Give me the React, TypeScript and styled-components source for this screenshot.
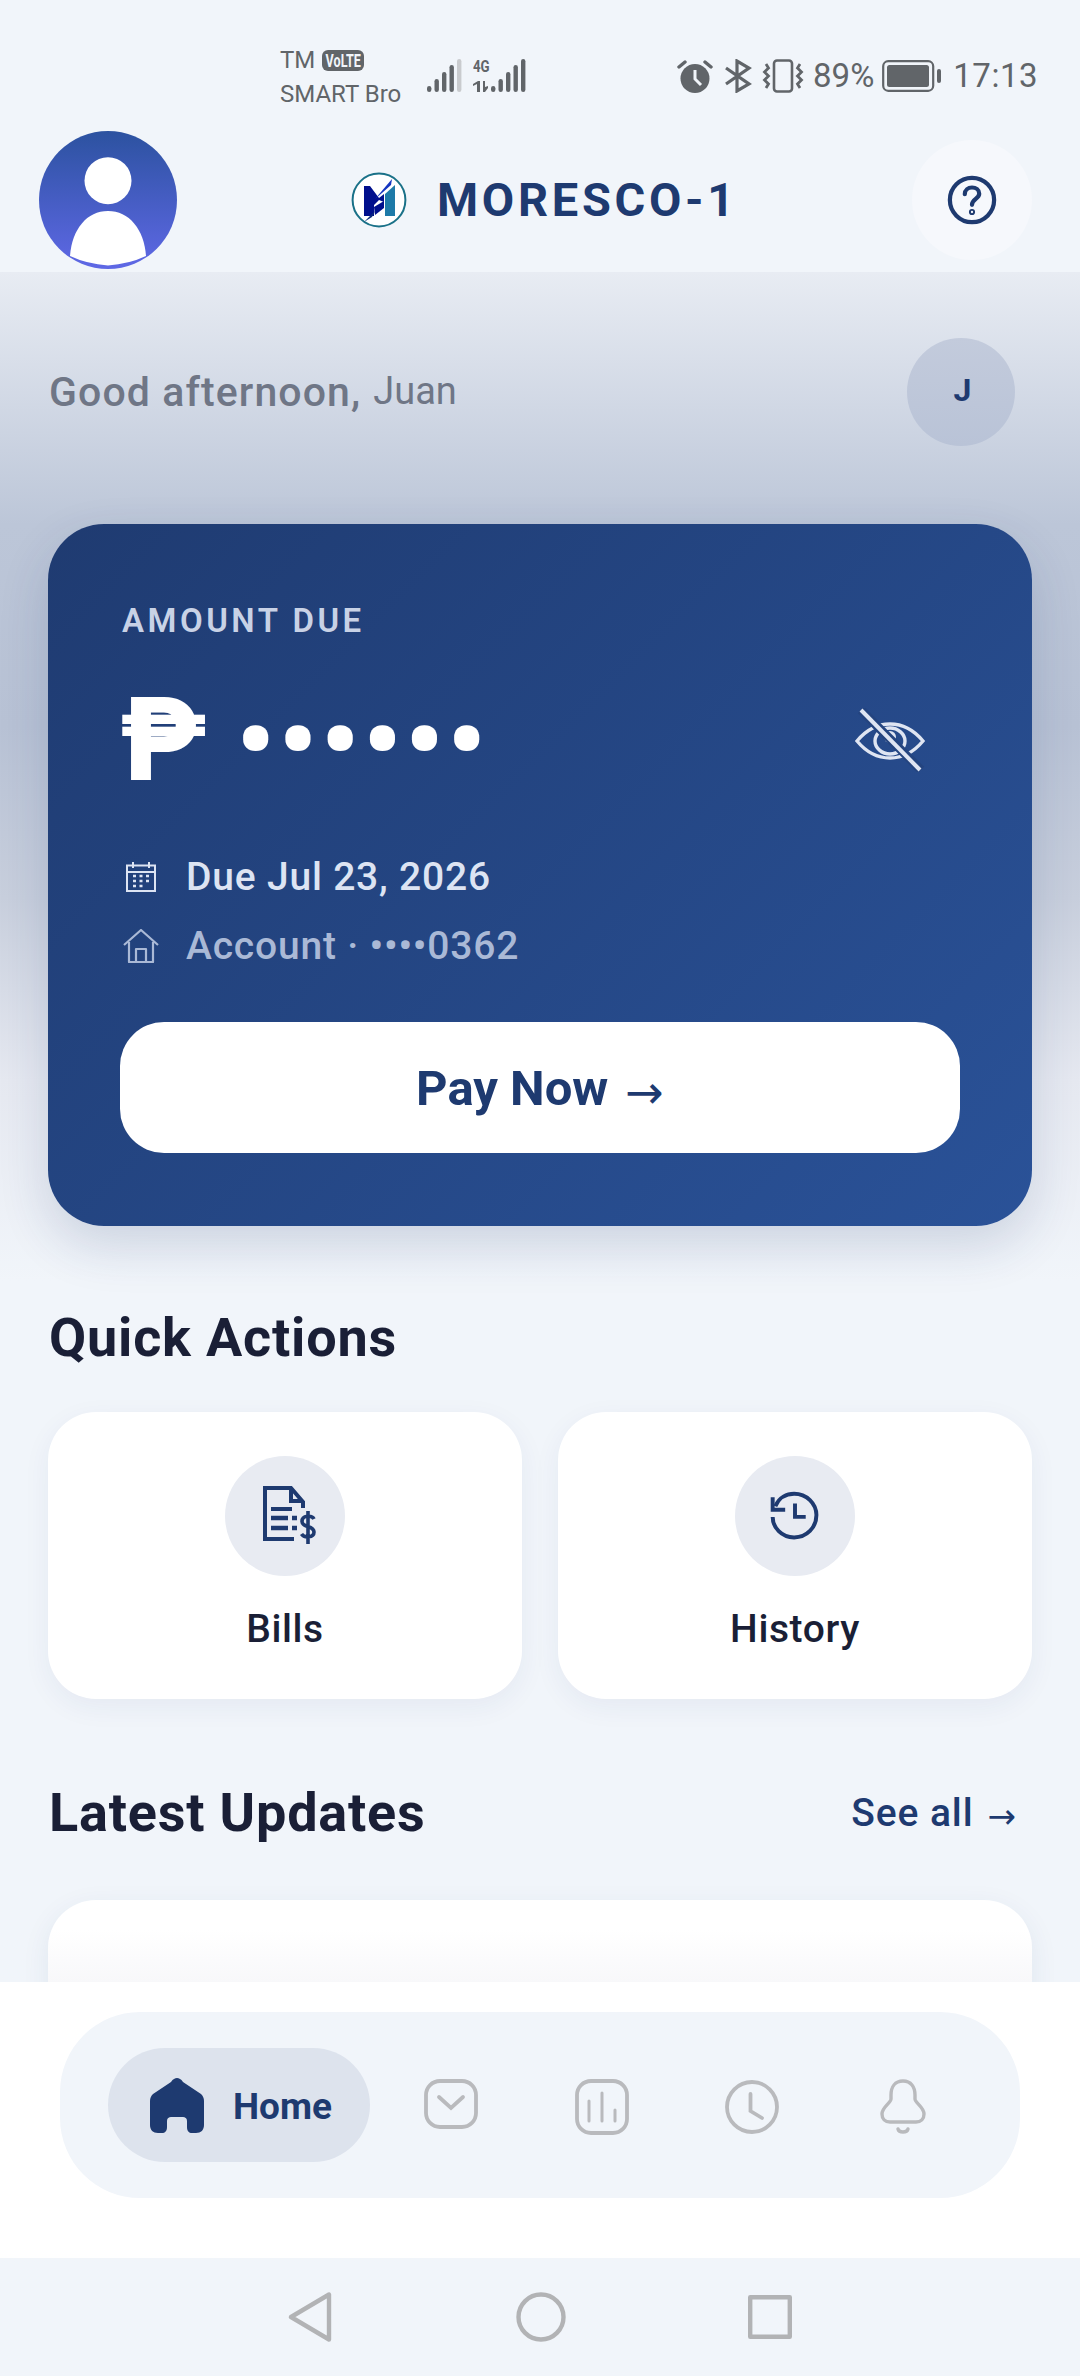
import React, { FC } from 'react';
import styled, { createGlobalStyle } from 'styled-components';

const navy = '#1e3a70';
const ink = '#1a1f36';
const paper = '#f1f5fa';
const statusGrey = '#616569';
const idleGrey = '#b9babd';
const systemGrey = '#b2b3b5';

const GlobalStyle = createGlobalStyle`
  html, body {
    margin: 0;
    padding: 0;
    background: ${paper};
  }
  * {
    box-sizing: border-box;
  }
  body {
    font-family: Roboto, "Liberation Sans", sans-serif;
  }
`;

const Page = styled.div`
  width: 1080px;
  height: 2376px;
  display: flex;
  flex-direction: column;
  overflow: hidden;
  background: ${paper};
`;

/* status bar */
const StatusBar = styled.div`
  height: 120px;
  flex: none;
  display: flex;
  align-items: flex-start;
  padding: 43px 42px 0 280px;
  color: ${statusGrey};
`;

const Carriers = styled.div`
  width: 147px;
  font-size: 24px;
  flex: none;
`;

const CarrierLine = styled.div`
  display: flex;
  align-items: center;
  gap: 7px;
  height: 34px;
`;

const VolteBadge = styled.span`
  width: 42px;
  height: 21px;
  border-radius: 6px;
  background: ${statusGrey};
  color: ${paper};
  display: flex;
  align-items: center;
  justify-content: center;
  overflow: hidden;
`;

const VolteText = styled.span`
  display: inline-block;
  font-size: 18px;
  font-weight: 700;
  line-height: 21px;
  white-space: nowrap;
  transform: scaleX(0.7);
`;

const Signals = styled.div`
  display: flex;
  align-items: flex-end;
  height: 49px;
  flex: none;
`;

const NetStack = styled.div`
  display: flex;
  flex-direction: column;
  align-items: flex-start;
  justify-content: space-between;
  width: 18px;
  height: 33px;
  margin-left: 11px;
`;

const NetLabel = styled.span`
  font-size: 17px;
  font-weight: 700;
  line-height: 15px;
  white-space: nowrap;
  transform: scaleX(0.78);
  transform-origin: left center;
`;

const StatusRight = styled.div`
  margin-left: auto;
  display: flex;
  align-items: center;
  height: 44px;
  margin-top: 11px;
  font-size: 33px;
`;

const StatusIcon = styled.svg<{ $left?: number }>`
  margin-left: ${(p) => p.$left ?? 0}px;
  flex: none;
`;

const StatusText = styled.span<{ $left: number; $spacing?: number }>`
  margin-left: ${(p) => p.$left}px;
  letter-spacing: ${(p) => p.$spacing ?? 0}px;
  line-height: 44px;
`;

/* header */
const Header = styled.header`
  height: 152px;
  flex: none;
  display: flex;
  align-items: center;
  justify-content: space-between;
  padding: 8px 48px 0 39px;
  background: ${paper};
`;

const Avatar = styled.div`
  width: 138px;
  height: 138px;
  border-radius: 50%;
  overflow: hidden;
  background: linear-gradient(180deg, #2c52a0 0%, #5f68e6 100%);
`;

const Brand = styled.div`
  display: flex;
  align-items: center;
  gap: 30px;
`;

const BrandName = styled.span`
  color: ${navy};
  font-size: 47px;
  font-weight: 700;
  letter-spacing: 3.7px;
  line-height: 56px;
`;

const HelpButton = styled.div`
  width: 120px;
  height: 120px;
  border-radius: 50%;
  background: #f6f8fc;
  display: flex;
  align-items: center;
  justify-content: center;
`;

/* scrolling body */
const Content = styled.main`
  flex: 1;
  min-height: 0;
  overflow: hidden;
  padding: 0 48px;
  background: linear-gradient(180deg, #e8ecf3 0%, #bcc6d8 25%, #b8c2d5 45%, #c8cfdd 62%, #e6e9f1 80%, ${paper} 100%) 0 0 / 100% 1010px no-repeat;
`;

const Greeting = styled.div`
  height: 252px;
  display: flex;
  align-items: flex-start;
  justify-content: space-between;
  padding: 66px 17px 0 1px;
`;

const GreetingText = styled.div`
  display: flex;
  align-items: baseline;
  height: 108px;
  padding-top: 26px;
  color: #6f7686;
`;

const GreetingLead = styled.span`
  font-size: 41px;
  font-weight: 500;
  letter-spacing: 1.1px;
  line-height: 56px;
`;

const GreetingName = styled.span`
  font-size: 38px;
  margin-left: 12px;
  position: relative;
  top: -2px;
`;

const UserBadge = styled.div`
  width: 108px;
  height: 108px;
  border-radius: 50%;
  background: linear-gradient(180deg, #c3cbdc, #b9c3d7);
  color: ${navy};
  font-size: 32px;
  font-weight: 700;
  display: flex;
  align-items: center;
  justify-content: center;
  padding: 0 0 4px 3px;
`;

const DueCard = styled.section`
  height: 702px;
  border-radius: 56px;
  padding: 78px 72px 72px;
  background: linear-gradient(135deg, #1f3b71 0%, #2a5298 100%);
  box-shadow: 0 20px 50px rgba(30, 58, 112, 0.16);
  display: flex;
  flex-direction: column;
`;

const DueLabel = styled.div`
  color: #c8d2e6;
  font-size: 33px;
  font-weight: 600;
  letter-spacing: 3.5px;
  line-height: 38px;
  margin-left: 2px;
`;

const AmountRow = styled.div`
  height: 90px;
  margin-top: 55px;
  display: flex;
  align-items: center;
`;

const PesoSign = styled.span`
  color: #fff;
  font-size: 116px;
  font-weight: 900;
  line-height: 90px;
  width: 116px;
  flex: none;
`;

const HiddenAmount = styled.span`
  color: #fff;
  font-size: 108px;
  line-height: 90px;
  letter-spacing: 3.4px;
  font-weight: 700;
`;

const EyeToggle = styled.div`
  margin-left: auto;
  margin-right: 35px;
  display: flex;
`;

const MetaRow = styled.div<{ $dim?: boolean; $top: number }>`
  display: flex;
  align-items: center;
  gap: 25px;
  height: 50px;
  margin-top: ${(p) => p.$top}px;
  color: ${(p) => (p.$dim ? '#aab9d6' : '#dde4f3')};
  font-size: 39px;
  font-weight: 500;
  letter-spacing: 0.8px;
`;

const MetaIcon = styled.span`
  width: 40px;
  display: flex;
  justify-content: center;
  margin-left: 1px;
  flex: none;
`;

const PayButton = styled.div`
  height: 131px;
  margin-top: 51px;
  border-radius: 44px;
  background: #fff;
  color: ${navy};
  display: flex;
  align-items: center;
  justify-content: center;
  gap: 17px;
  font-size: 49px;
  font-weight: 700;
`;

const PayLabel = styled.span`
  padding-top: 2px;
`;

const Arrow = styled.span<{ $size: number; $drop: number }>`
  font-family: "DejaVu Sans", sans-serif;
  font-weight: 400;
  font-size: ${(p) => p.$size}px;
  letter-spacing: 0;
  line-height: 1;
  margin-top: ${(p) => p.$drop}px;
`;

const SectionHead = styled.div<{ $top: number }>`
  margin-top: ${(p) => p.$top}px;
  display: flex;
  align-items: center;
  justify-content: space-between;
  height: 64px;
`;

const SectionTitle = styled.h2`
  margin: 0 0 0 1px;
  color: ${ink};
  font-size: 54px;
  font-weight: 700;
  letter-spacing: 0.8px;
  line-height: 64px;
`;

const SeeAll = styled.div`
  color: ${navy};
  font-size: 39px;
  font-weight: 500;
  letter-spacing: 0.9px;
  margin-right: 16px;
  display: flex;
  align-items: center;
  gap: 14px;
`;

const ActionGrid = styled.div`
  margin-top: 42px;
  display: grid;
  grid-template-columns: 1fr 1fr;
  gap: 36px;
`;

const ActionCard = styled.div`
  height: 287px;
  border-radius: 48px;
  background: #fff;
  box-shadow: 0 8px 28px rgba(30, 58, 112, 0.06);
  display: flex;
  flex-direction: column;
  align-items: center;
  padding-top: 44px;
`;

const ActionIcon = styled.div<{ $shift?: number }>`
  width: 120px;
  height: 120px;
  border-radius: 50%;
  background: #e8ebf2;
  display: flex;
  align-items: center;
  justify-content: center;
  padding-left: ${(p) => p.$shift ?? 0}px;
`;

const ActionLabel = styled.div`
  margin-top: 30px;
  color: ${ink};
  font-size: 39px;
  font-weight: 500;
  letter-spacing: 0.6px;
  line-height: 46px;
`;

const UpdateCard = styled.div`
  margin-top: 55px;
  height: 300px;
  border-radius: 48px;
  background: linear-gradient(180deg, #fff 0, #fff 30px, #f8f8fa 82px);
  box-shadow: 0 8px 28px rgba(30, 58, 112, 0.08);
`;

/* bottom navigation */
const BottomNav = styled.nav`
  height: 276px;
  flex: none;
  background: #fff;
  padding: 30px 60px 0;
`;

const NavPill = styled.div`
  height: 186px;
  border-radius: 80px;
  background: ${paper};
  display: flex;
  align-items: center;
  padding: 0 0 0 48px;
`;

const ActiveTab = styled.div`
  width: 262px;
  height: 114px;
  border-radius: 57px;
  background: #dde3ed;
  display: flex;
  align-items: center;
  gap: 29px;
  padding-left: 42px;
  color: ${navy};
  font-size: 37px;
  font-weight: 700;
  flex: none;
`;

const TabLabel = styled.span`
  padding-top: 2px;
`;

const IdleTabs = styled.div`
  display: grid;
  grid-template-columns: repeat(4, 150.5px);
  margin-left: 6px;
  padding-top: 4px;
`;

const IdleTab = styled.div`
  display: flex;
  justify-content: center;
`;

const SystemNav = styled.div`
  height: 118px;
  flex: none;
  background: ${paper};
  display: flex;
  align-items: center;
  justify-content: center;
  gap: 182px;
  padding-bottom: 1px;
`;

const SignalBars: FC<{ dim?: boolean }> = ({ dim }) => (
  <svg width="35" height="33" viewBox="0 0 35 33">
    {[6, 13, 20, 27, 33].map((h, i) => (
      <rect
        key={h}
        x={i * 7.5}
        y={33 - h}
        width="4.4"
        height={h}
        rx="2.2"
        fill={dim && i === 4 ? '#c9cbce' : statusGrey}
      />
    ))}
  </svg>
);

const MoreLogo: FC = () => (
  <svg width="56" height="56" viewBox="0 0 56 56">
    <circle cx="28" cy="28" r="26.4" fill="#fff" stroke="#1a7188" strokeWidth="2" />
    <path d="M13 14 H19 L28 26 L33 22 V30 L28 28 L23 33 V44 H13 Z" fill="#000f8c" />
    <path d="M23 35 L33 29 V36 L24 43 Z" fill="#000f8c" />
    <path d="M34 22 L44 13 V44 H34 Z" fill="#1e7aa8" />
    <path d="M41 7 L24 27 L31 21 L40 13 Z" fill="#1535c0" />
    <path d="M13 50 L24 39 L21 45 Z" fill="#0b2a78" />
  </svg>
);

const App: FC = () => (
  <Page>
    <GlobalStyle />
    <StatusBar>
      <Carriers>
        <CarrierLine>
          TM
          <VolteBadge>
            <VolteText>VoLTE</VolteText>
          </VolteBadge>
        </CarrierLine>
        <CarrierLine>SMART Bro</CarrierLine>
      </Carriers>
      <Signals>
        <SignalBars dim />
        <NetStack>
          <NetLabel>4G</NetLabel>
          <svg width="18" height="11" viewBox="0 0 18 11" fill={statusGrey}>
            <path d="M4 11 V3 L0 5 V3 L5 0 H7 V11 Z M10 0 H12 V6 L15 5 V7 L12 11 H10 Z" />
          </svg>
        </NetStack>
        <SignalBars />
      </Signals>
      <StatusRight>
        <svg width="36" height="33" viewBox="0 0 36 33">
          <circle cx="18" cy="18.500" r="14.500" fill={statusGrey} />
          <path d="M18 10 V19 L24 25" stroke={paper} strokeWidth="3" fill="none" />
          <path d="M2 7 L8 2 M34 7 L28 2" stroke={statusGrey} strokeWidth="3.4" strokeLinecap="round" />
        </svg>
        <StatusIcon $left={11} width="28" height="34" viewBox="0 0 28 34" fill="none" stroke={statusGrey} strokeWidth="3.2">
          <path d="M2 9 L25 25 L13 32 V2 L25 9 L2 25" />
        </StatusIcon>
        <StatusIcon $left={10} width="42" height="34" viewBox="0 0 42 34" fill="none" stroke={statusGrey} strokeWidth="2.600">
          <rect x="12" y="1.500" width="18" height="31" rx="3" />
          <path d="M4 5 L6.500 9 L2.500 13 L6.500 17 L2.500 21 L6.500 25 L4 29 M38 5 L35.500 9 L39.500 13 L35.500 17 L39.500 21 L35.500 25 L38 29" strokeWidth="2.800" />
        </StatusIcon>
        <StatusText $left={9}>89%</StatusText>
        <StatusIcon $left={8} width="60" height="32" viewBox="0 0 60 32">
          <rect x="1.200" y="1.200" width="50" height="29.600" rx="5" fill="none" stroke={statusGrey} strokeWidth="2.200" />
          <rect x="5" y="5" width="42" height="22" rx="2.500" fill={statusGrey} />
          <rect x="55" y="9" width="4" height="14" rx="2" fill={statusGrey} />
        </StatusIcon>
        <StatusText $left={11} $spacing={0.5}>17:13</StatusText>
      </StatusRight>
    </StatusBar>

    <Header>
      <Avatar>
        <svg width="138" height="138" viewBox="0 0 138 138">
          <circle cx="69" cy="49.700" r="23.500" fill="#fff" />
          <path d="M31 125 C33 98 48 80 69 80 C90 80 105 98 107 125 Q90 133 69 134.500 Q48 133 31 125 Z" fill="#fff" />
        </svg>
      </Avatar>
      <Brand>
        <MoreLogo />
        <BrandName>MORESCO-1</BrandName>
      </Brand>
      <HelpButton>
        <svg width="50" height="50" viewBox="0 0 52 52" fill="none" stroke={navy} strokeWidth="4.400" strokeLinecap="round">
          <circle cx="26" cy="26" r="23" />
          <path d="M18.500 20 C18.500 15.500 22 13 26 13 C30 13 33.500 15.500 33.500 19.500 C33.500 24.500 26 25.500 26 31" />
          <circle cx="26" cy="38.500" r="1" />
        </svg>
      </HelpButton>
    </Header>

    <Content>
      <Greeting>
        <GreetingText>
          <GreetingLead>Good afternoon,</GreetingLead>
          <GreetingName>Juan</GreetingName>
        </GreetingText>
        <UserBadge>J</UserBadge>
      </Greeting>

      <DueCard>
        <DueLabel>AMOUNT DUE</DueLabel>
        <AmountRow>
          <PesoSign>₱</PesoSign>
          <HiddenAmount>••••••</HiddenAmount>
          <EyeToggle>
            <svg width="70" height="64" viewBox="0 0 70 64" fill="none" stroke="#dfe5f2" strokeWidth="3.400">
              <path d="M2 33 C12 21 23 16 35 16 C47 16 58 21 68 33 C58 45 47 50 35 50 C23 50 12 45 2 33 Z" />
              <path d="M20 33 C20 26 27 20 35 20 C43 20 50 26 50 33 C50 40 43 46 35 46 C27 46 20 40 20 33 Z" />
              <circle cx="35" cy="29" r="6" fill="#dfe5f2" stroke="none" />
              <path d="M6 2 L66 62" stroke="#24447f" strokeWidth="9" />
              <path d="M6 2 L65 62" strokeWidth="4" />
            </svg>
          </EyeToggle>
        </AmountRow>
        <MetaRow $top={67}>
          <MetaIcon>
            <svg width="30" height="30" viewBox="0 0 30 30" fill="none" stroke="#dde4f3" strokeWidth="2">
              <rect x="1" y="3.500" width="28" height="25.500" />
              <path d="M1 10 H29 M7 0 V6 M23 0 V6" />
              <path d="M7 14 H10 M13.500 14 H16.500 M20 14 H23 M7 19 H10 M13.500 19 H16.500 M20 19 H23 M7 24 H10 M13.500 24 H16.500" strokeWidth="2.400" />
            </svg>
          </MetaIcon>
          Due Jul 23, 2026
        </MetaRow>
        <MetaRow $dim $top={19}>
          <MetaIcon>
            <svg width="36" height="34" viewBox="0 0 36 34" fill="none" stroke="#aab9d6" strokeWidth="2.200" strokeLinejoin="round">
              <path d="M1 16 L18 1 L35 16 M6 13 V33 H30 V13" />
              <path d="M13 33 V20 H23 V33" />
            </svg>
          </MetaIcon>
          Account · ••••0362
        </MetaRow>
        <PayButton>
          <PayLabel>Pay Now</PayLabel>
          <Arrow $size={46} $drop={9}>→</Arrow>
        </PayButton>
      </DueCard>

      <SectionHead $top={80}>
        <SectionTitle>Quick Actions</SectionTitle>
      </SectionHead>
      <ActionGrid>
        <ActionCard>
          <ActionIcon $shift={12}>
            <svg width="56" height="60" viewBox="0 0 56 60" fill="none" stroke={navy} strokeWidth="4">
              <path d="M31 53 H2 V2 H28 L40 16 V22 M28 2 V15 H40" />
              <path d="M8 23 H29" />
              <path d="M8 32 H25 M29 32 H34 M8 42 H25 M29 42 H34" strokeWidth="4.400" />
              <path d="M51 33 C49 29 39 29 39 35.500 C39 42 51 39 51 46 C51 52 41 52 38.500 48 M45 25 V58" strokeWidth="3.600" />
            </svg>
          </ActionIcon>
          <ActionLabel>Bills</ActionLabel>
        </ActionCard>
        <ActionCard>
          <ActionIcon>
            <svg width="50" height="50" viewBox="0 0 56 56" fill="none" stroke={navy} strokeWidth="4.400">
              <path d="M6 17 C10 7 19 3 27 3 C41 3 52 14 52 27 C52 41 41 52 27 52 C13 52 3 41 3 29" />
              <path d="M3 7 V21 H17" />
              <path d="M28 14 V29 H40" />
            </svg>
          </ActionIcon>
          <ActionLabel>History</ActionLabel>
        </ActionCard>
      </ActionGrid>

      <SectionHead $top={82}>
        <SectionTitle>Latest Updates</SectionTitle>
        <SeeAll>
          See all
          <Arrow $size={34} $drop={6}>→</Arrow>
        </SeeAll>
      </SectionHead>
      <UpdateCard />
    </Content>

    <BottomNav>
      <NavPill>
        <ActiveTab>
          <svg width="54" height="56" viewBox="0 0 54 56" fill={navy}>
            <path d="M27 1 C25 1 23 2 21 5 L3 17 C1 19 0 21 0 24 L0 48 C0 53 3 56 8 56 L12 56 C15 56 17 54 17 50 L17 44 C17 41 19 40 21 40 L33 40 C35 40 37 41 37 44 L37 50 C37 54 39 56 42 56 L46 56 C51 56 54 53 54 48 L54 24 C54 21 53 19 51 17 L33 5 C31 2 29 1 27 1 Z" />
          </svg>
          <TabLabel>Home</TabLabel>
        </ActiveTab>
        <IdleTabs>
          <IdleTab>
            <svg width="54" height="50" viewBox="0 0 54 50" fill="none" stroke={idleGrey} strokeWidth="3.800" strokeLinecap="round">
              <rect x="2" y="2" width="50" height="46" rx="14" />
              <path d="M15 18 L27 29 L39 18" />
            </svg>
          </IdleTab>
          <IdleTab>
            <svg width="54" height="56" viewBox="0 0 54 56" fill="none" stroke={idleGrey} strokeWidth="3.800" strokeLinecap="round">
              <rect x="2" y="2" width="50" height="52" rx="14" />
              <path d="M14 42 V22 M27 42 V14 M40 42 V31" strokeWidth="3" />
            </svg>
          </IdleTab>
          <IdleTab>
            <svg width="54" height="56" viewBox="0 0 54 56" fill="none" stroke={idleGrey} strokeWidth="3.800" strokeLinecap="round">
              <circle cx="27" cy="28" r="25" />
              <path d="M25.500 15 V32 L37 39" />
            </svg>
          </IdleTab>
          <IdleTab>
            <svg width="46" height="56" viewBox="0 0 46 56" fill="none" stroke={idleGrey} strokeWidth="3.400" strokeLinecap="round">
              <path d="M23 2 C15 2 11 8 11 16 L11 20 C11 24 2 28 2 35 C2 40 5 43 10 43 L36 43 C41 43 44 40 44 35 C44 28 35 24 35 20 L35 16 C35 8 31 2 23 2 Z" />
              <path d="M18 50 C19 54 27 54 28 50" />
            </svg>
          </IdleTab>
        </IdleTabs>
      </NavPill>
    </BottomNav>

    <SystemNav>
      <svg width="46" height="50" viewBox="0 0 46 50" fill="none" stroke={systemGrey} strokeWidth="4.400" strokeLinejoin="round">
        <path d="M41 2.500 V47.500 L3 25 Z" />
      </svg>
      <svg width="50" height="50" viewBox="0 0 50 50" fill="none" stroke={systemGrey} strokeWidth="4.400">
        <circle cx="25" cy="25" r="22.500" />
      </svg>
      <svg width="44" height="44" viewBox="0 0 44 44" fill="none" stroke={systemGrey} strokeWidth="4.400" strokeLinejoin="round">
        <rect x="2.200" y="2.200" width="39.600" height="39.600" />
      </svg>
    </SystemNav>
  </Page>
);

export default App;
